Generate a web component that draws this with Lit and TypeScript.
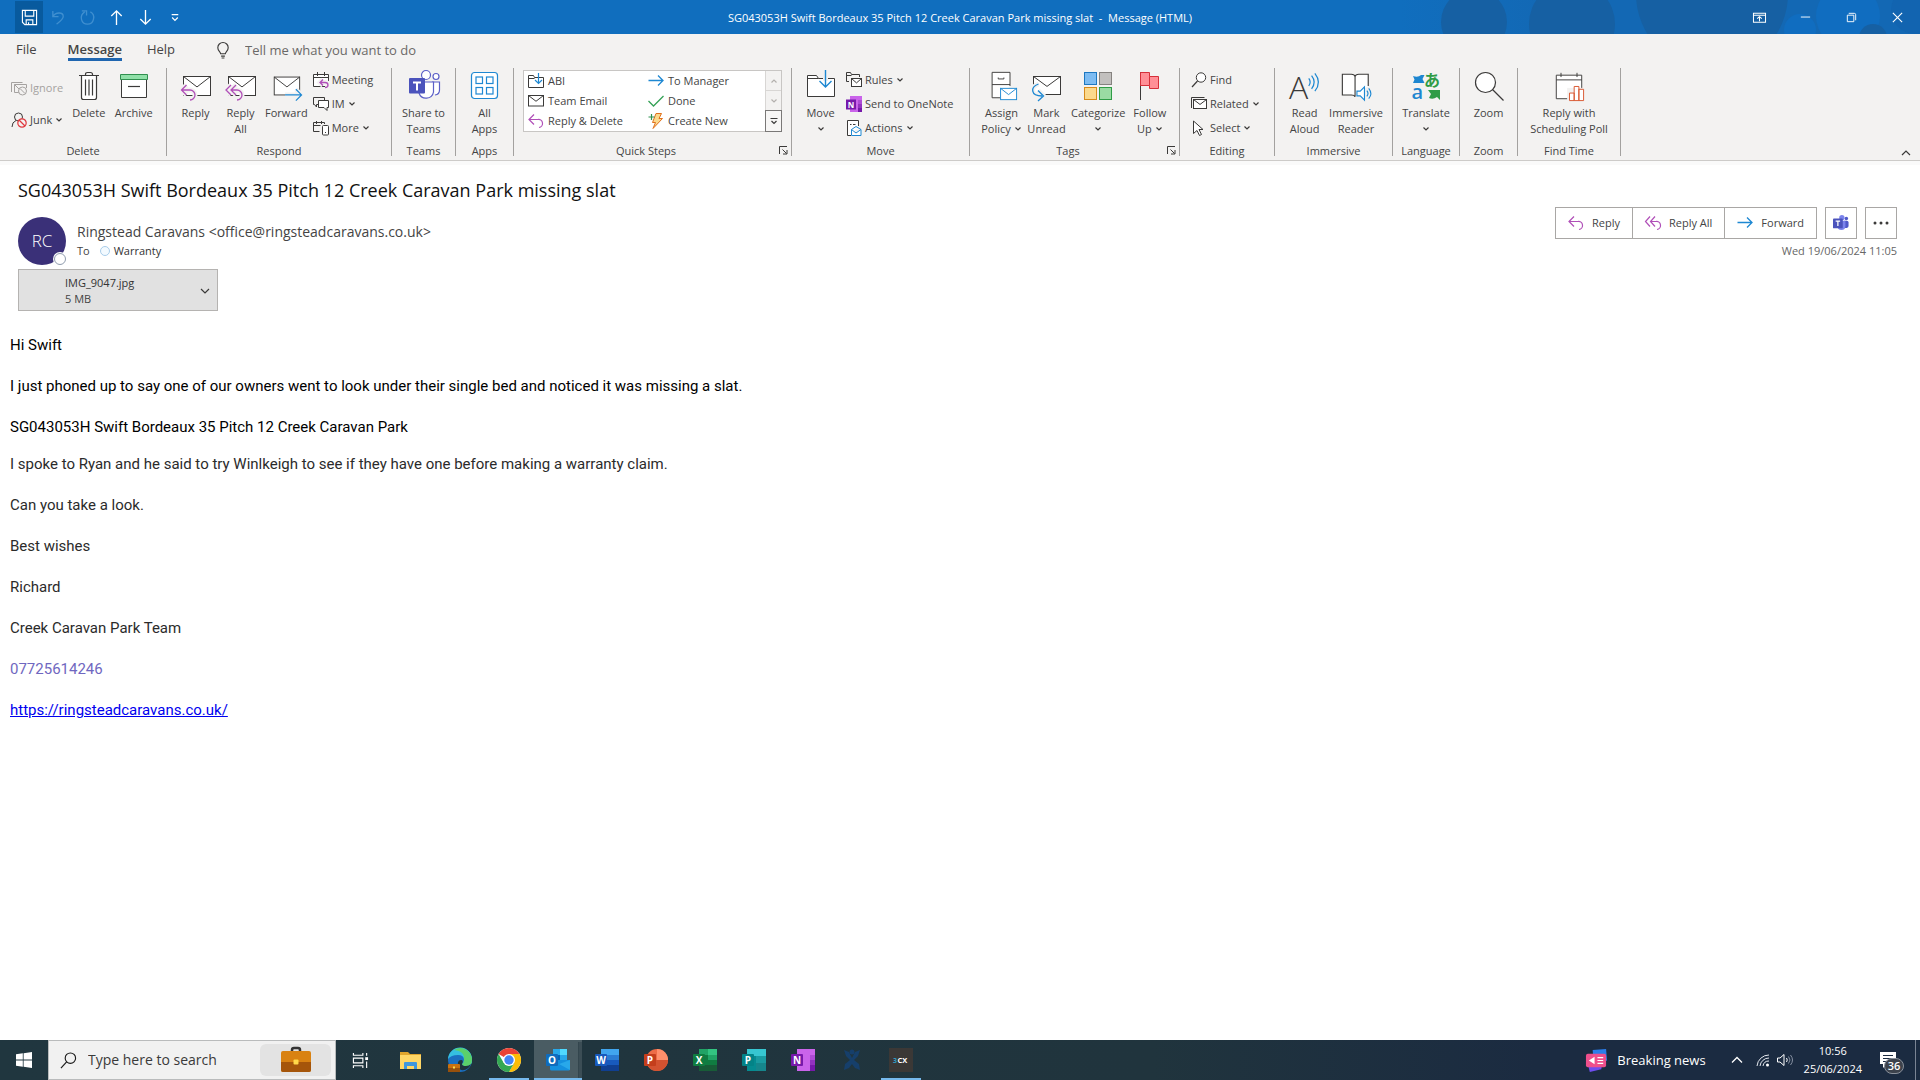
import { LitElement, html, svg, css, nothing, type TemplateResult } from "lit";
import { customElement, property } from "lit/decorators.js";
import { classMap } from "lit/directives/class-map.js";

const INK = "#3b3a39";
const BLUE = "#1e88d2";
const PURPLE = "#b04fb8";
const PAPER = "#f3f2f1";

/* ---------- Icon shapes, keyed by name ---------- */

const envelope = (x: number, y: number, w: number, h: number, color = INK, fill = "#fff") => svg`
  <rect x=${x} y=${y} width=${w} height=${h} fill=${fill} stroke=${color}/>
  <path d="M${x} ${y}L${x + w / 2} ${y + h * 0.55}L${x + w} ${y}" fill="none" stroke=${color}/>`;

const haloed = (d: string, color: string) => svg`
  <path d=${d} fill="none" stroke=${PAPER} stroke-width="5"/>
  <path d=${d} fill="none" stroke=${color} stroke-width="1.3"/>`;

const officeTile = (letter: string, plate: string, bands: TemplateResult) => svg`
  ${bands}
  <rect x="0" y="6" width="12" height="12" rx="1" fill=${plate}/>
  <text x="6" y="15.6" text-anchor="middle" font-size="10" font-weight="700" fill="#fff">${letter}</text>`;

const ICONS: Record<string, [string, TemplateResult]> = {
  save: ["0 0 18 18", svg`<path d="M1.5 1.5h15v15h-12.500l-2.500-2.500z M4.500 1.500v6h9v-6 M5.500 16.500v-5h7v5 M8 14v2.500" fill="none" stroke="#fff" stroke-width="1.200"/>`],
  undo: ["0 0 18 18", svg`<path d="M3 2v6h6 M3 8c3-5 11-5 11 0 0 3-3 5-7 8" fill="none" stroke="#3f8fd0" stroke-width="1.400"/>`],
  redo: ["0 0 18 18", svg`<path d="M3 2h5v5 M12 3c6 3 4 13-3 13-7 0-9-9-3-13" fill="none" stroke="#3f8fd0" stroke-width="1.400"/>`],
  up: ["0 0 18 18", svg`<path d="M9 17V2 M3.500 7.500L9 2l5.500 5.500" fill="none" stroke="#fff" stroke-width="1.400"/>`],
  down: ["0 0 18 18", svg`<path d="M9 1v15 M3.500 10.500L9 16l5.500-5.500" fill="none" stroke="#fff" stroke-width="1.400"/>`],
  customize: ["0 0 18 18", svg`<path d="M6 6h7 M6.500 9l3 3 3-3" fill="none" stroke="#fff" stroke-width="1.300"/>`],
  ribbonOptions: ["0 0 14 14", svg`<path d="M.5 2.500h13v9.500h-13z M.5 4.500h13 M7 11V6 M4.500 8.300L7 6l2.500 2.300" fill="none" stroke="#fff" stroke-width="1.100"/>`],
  minimize: ["0 0 14 14", svg`<path d="M2 6.500h10" stroke="#fff"/>`],
  restore: ["0 0 14 14", svg`<path d="M2.500 4.500h7v7h-7z M4 2.500h6q1.500 0 1.500 1.500v6" fill="none" stroke="#fff"/>`],
  close: ["0 0 14 14", svg`<path d="M2 2l10 10M12 2L2 12" stroke="#fff" stroke-width="1.200"/>`],
  bulb: ["0 0 14 18", svg`<path d="M4.500 12.500c0-2-3-3-3-6.500a5.500 5.500 0 0 1 11 0c0 3.500-3 4.500-3 6.500z M5 15h4 M5.500 17h3" fill="none" stroke=${INK} stroke-width="1.200"/>`],
  chevron: ["0 0 8 6", svg`<path d="M1.500 1.500L4 4l2.500-2.500" fill="none" stroke=${INK} stroke-width="1.200"/>`],
  chevronUp: ["0 0 10 6", svg`<path d="M1 5l4-4 4 4" fill="none" stroke=${INK} stroke-width="1.200"/>`],
  chevronWide: ["0 0 10 6", svg`<path d="M1 1l4 4 4-4" fill="none" stroke=${INK} stroke-width="1.200"/>`],
  scrollUp: ["0 0 8 6", svg`<path d="M1.500 4.500L4 2l2.500 2.500" fill="none" stroke="#b3b0ad" stroke-width="1.200"/>`],
  scrollDown: ["0 0 8 6", svg`<path d="M1.500 1.500L4 4l2.500-2.500" fill="none" stroke="#b3b0ad" stroke-width="1.200"/>`],
  gallery: ["0 0 8 8", svg`<path d="M.5 1.500h7 M1.500 4L4 6.500 6.500 4" fill="none" stroke=${INK} stroke-width="1.200"/>`],
  launcher: ["0 0 9 9", svg`<path d="M.5 8V.5H8 M3.500 3.500l4 4 M8 4v4H4" fill="none" stroke=${INK}/>`],

  trash: ["0 0 32 32", svg`<path d="M8.500 6v21.500q0 2 2 2h11q2 0 2-2V6z" fill="#fff"/><path d="M6 5.500h20 M12.500 5.500v-1q0-2 2-2h3q2 0 2 2v1 M8.500 6v21.500q0 2 2 2h11q2 0 2-2V6 M12.500 9.500v16 M16 9.500v16 M19.500 9.500v16" fill="none" stroke=${INK} stroke-width="1.200"/>`],
  archive: ["0 0 32 32", svg`<path d="M3.500 9.500h25v18h-25z" fill="#fff" stroke=${INK}/><path d="M2.500 4.500h27v5h-27z" fill="#8fe0a8" stroke="#2f8f4e"/><path d="M10 16.500h12" stroke=${INK} stroke-width="1.200"/>`],
  reply: ["0 0 32 32", svg`${envelope(3.5, 6.5, 27, 19)}${haloed("M6.500 15L1.500 20l5 5 M1.500 20H10a5 5 0 0 1 0 10", PURPLE)}`],
  replyAll: ["0 0 32 32", svg`${envelope(3.5, 6.5, 27, 19)}${haloed("M6 15l-5 5 5 5 M11 15l-5 5 5 5 M6 20h6a5 5 0 0 1 0 10", PURPLE)}`],
  forward: ["0 0 34 32", svg`${envelope(4.5, 6.5, 27, 19)}${haloed("M16 25.500h17 M27.500 19.500l6 6-6 6", BLUE)}`],
  teams: ["0 0 32 32", svg`<g fill="#fff" stroke="#5b5fc7" stroke-width="1.200"><circle cx="28" cy="6.500" r="3"/><path d="M24 12h7.500v8q0 4.500-4.500 5"/><circle cx="18" cy="5" r="4.500"/><path d="M11 12h14.500v10a7.500 7.500 0 0 1-14.500 1z"/></g><rect x="1" y="8" width="16" height="15.500" rx="1" fill="#4b53bc"/><path d="M5 12.500h8 M9 12.500v8" stroke="#fff" stroke-width="2"/>`],
  apps: ["0 0 32 32", svg`<g fill="#fff" stroke=${BLUE} stroke-width="1.200"><rect x="2.500" y="2.500" width="26" height="26" rx="3"/><rect x="7" y="7" width="6.500" height="6.500"/><rect x="17.500" y="7" width="6.500" height="6.500"/><rect x="7" y="17.500" width="6.500" height="6.500"/><rect x="17.500" y="17.500" width="6.500" height="6.500"/></g>`],
  move: ["0 0 32 32", svg`<path d="M2.500 26.500v-21h9l2 3h16v18z" fill="#fff" stroke=${INK}/><path d="M2.500 8.500h11" stroke=${INK}/><path d="M20.500 3v8" stroke=${PAPER} stroke-width="5"/><path d="M20.500 0v17 M14.500 11l6 6 6-6" fill="none" stroke=${BLUE} stroke-width="1.400"/>`],
  policy: ["0 0 34 34", svg`<path d="M25.500 17V2.500h-19v27H15 M6.500 15.500h19" fill="#fff" stroke=${INK}/><path d="M13 8v1.500h6V8" fill="none" stroke=${INK}/>${envelope(15.5, 19.5, 17, 12, BLUE)}`],
  unread: ["0 0 32 32", svg`${envelope(2.5, 6.500, 27, 18)}${haloed("M7.500 14C-1 17-.5 26 11 26 M7 20.500l5.500 5.500L7 31", BLUE)}`],
  categorize: ["0 0 32 32", svg`<rect x="2.500" y="2.500" width="12" height="12" fill="#7dbcf2" stroke="#1d78c1"/><rect x="17.500" y="2.500" width="12" height="12" fill="#c2c0be" stroke="#85827f"/><rect x="2.500" y="17.500" width="12" height="12" fill="#fbd98c" stroke="#d68a1b"/><rect x="17.500" y="17.500" width="12" height="12" fill="#9adba3" stroke="#2f9c46"/>`],
  flag: ["0 0 32 32", svg`<path d="M6.500 2v28" stroke=${INK}/><path d="M6.500 2.500h9v4h9v12h-9v-3h-9z" fill="#ff8f96" stroke="#d6303a"/><path d="M15.500 6.500v9" stroke="#d6303a"/>`],
  readAloud: ["0 0 34 32", svg`<text x="0" y="29.500" font-family="Open Sans" font-weight="300" font-size="34" fill=${INK}>A</text><path d="M21 8q3 4 0 8 M24 5q5.500 7 0 14 M27.500 2.500q7.500 9.500 0 19" fill="none" stroke=${BLUE} stroke-width="1.300"/>`],
  reader: ["0 0 34 32", svg`<path d="M30 16V3.500H20q-3.500 0-4 2.500-.500-2.500-4-2.500H2.500v22H12q3.500 0 4 2" fill="#fff" stroke=${INK} stroke-width="1.200"/><path d="M16 6v21" stroke=${INK} stroke-width="1.200"/><path d="M18 21.500h3.500L26 17v14l-4.500-4.500H18z" fill="#fff" stroke=${BLUE} stroke-width="1.200"/><path d="M28.500 21q2.500 3 0 6 M30.500 18.500q4.500 5.500 0 11" fill="none" stroke=${BLUE} stroke-width="1.200"/>`],
  translate: ["0 0 32 32", svg`<path d="M3 6q5 2 8-1l3.500 0-2 4 2 4H3l1.500-3.500z" fill="#1d86d0"/><text x="1.500" y="29" font-family="Open Sans" font-weight="600" font-size="20" fill="#1d86d0">a</text><text x="14" y="15.500" font-family="Noto Sans CJK JP" font-weight="700" font-size="16" fill="#2f9c46">あ</text><path d="M18 20h12v10l-3-3q-4 3-8 1l2-4z" fill="#2f9c46"/>`],
  zoom: ["0 0 32 32", svg`<circle cx="12.500" cy="12.500" r="10" fill="#fff" stroke=${INK} stroke-width="1.200"/><path d="M19.500 19.500L30.500 30.500" stroke=${INK} stroke-width="1.200"/>`],
  poll: ["0 0 34 32", svg`<path d="M3.500 4.500h27v25h-27z" fill="#fff" stroke=${INK}/><path d="M3.500 9.500h27 M8.500 2v4.500 M25.500 2v4.500" stroke=${INK}/><path d="M15 18h18v14H15z" fill=${PAPER}/><path d="M17.500 31.500v-8h5v8z M22.500 31.500v-15h5v15z M27.500 31.500v-12h5v12z" fill="#fff" stroke="#d8532c"/>`],

  ignore: ["0 0 16 16", svg`<path d="M.5 12V2.500h11 M15.500 8V4.500H3.500v8H8 M3.500 4.500L8 9" fill="none" stroke="#a5a2a0"/><circle cx="11.500" cy="11" r="4" fill=${PAPER} stroke="#a5a2a0"/><path d="M9 8.500l5 5" stroke="#a5a2a0"/>`],
  junk: ["0 0 16 16", svg`<circle cx="7.500" cy="5" r="4" fill="none" stroke=${INK}/><path d="M5 8.500Q1 10 1 15" fill="none" stroke=${INK}/><circle cx="11" cy="11" r="4.200" fill=${PAPER} stroke="#e0383e" stroke-width="1.200"/><path d="M8 8l6 6" stroke="#e0383e" stroke-width="1.200"/>`],
  meeting: ["0 0 16 16", svg`<path d="M.5 2.500h15v12H.5z" fill="#fff" stroke=${INK}/><path d="M.5 5.500h15 M4.500 0v4 M11.500 0v4" stroke=${INK}/>${haloed("M10 7.500L7 10.500l3 3 M7 10.500h5q3 0 3 2.500t-3 2.500", PURPLE)}`],
  im: ["0 0 16 16", svg`<path d="M5 8.500H3.500V11L1.500 8.500H.5v-7h11V4" fill="none" stroke=${INK}/><path d="M5.500 4.500h10v7H14v3l-3-3H5.500z" fill="#fff" stroke=${INK}/>`],
  more: ["0 0 16 16", svg`<path d="M6.500 11.500h-6v-9h11V4 M.5 5.500h7 M3.500 1v3 M8.500 1v3" fill="none" stroke=${INK}/><rect x="9.500" y="5.500" width="6" height="9.500" rx="1" fill="#fff" stroke=${INK}/><path d="M12 12.500h1" stroke=${INK}/>`],
  moveSmall: ["0 0 16 16", svg`<path d="M.5 14.500v-12h5l1 2h9v10z M.5 5.500h6" fill="#fff" stroke=${INK}/><path d="M10.500 0v10.500 M7 7l3.500 3.500L14 7" fill="none" stroke=${BLUE} stroke-width="1.200"/>`],
  mail: ["0 0 16 16", envelope(0.5, 2.5, 15, 10.5)],
  replySmall: ["0 0 16 16", svg`<path d="M6 1.500L1 6.500l5 5 M1 6.500h9a4 4 0 0 1 1 8" fill="none" stroke=${PURPLE} stroke-width="1.200"/>`],
  replyAllSmall: ["0 0 16 16", svg`<path d="M5 1.500L.5 6.500l4.500 5 M10 1.500L5.500 6.500l4.500 5 M5.500 6.500H11a4 4 0 0 1 1 8" fill="none" stroke=${PURPLE} stroke-width="1.200"/>`],
  arrowRight: ["0 0 16 16", svg`<path d="M.5 7.500h14.500 M10 2.500l5 5-5 5" fill="none" stroke=${BLUE} stroke-width="1.300"/>`],
  check: ["0 0 16 16", svg`<path d="M.5 8l5 5L15.500 3" fill="none" stroke="#35a156" stroke-width="1.300"/>`],
  bolt: ["0 0 16 16", svg`<path d="M8 .5h5.500L11 5.500h3.500L5 15.500l2.500-6h-3z" fill="#fbd98c" stroke="#e0701c"/><path d="M3.500 1v6 M.5 4h6" stroke="#2f8f4e" stroke-width="1.200"/>`],
  rules: ["0 0 16 16", svg`<path d="M3 9.500H.5v-9h4l1 2h8V5 M.5 3.500h5" fill="none" stroke=${INK}/>${envelope(5.5, 6.5, 10, 8)}`],
  onenoteSmall: ["0 0 16 16", svg`<rect x="4" y="0" width="12" height="16" fill="#ca64ea"/><path d="M12 4h4v4h-4z" fill="#ae4bd5"/><path d="M12 8h4v4h-4z" fill="#9332bf"/><path d="M12 12h4v4h-4z" fill="#7719aa"/><rect x="0" y="3.500" width="10" height="10" fill="#7719aa"/><text x="5" y="11.600" text-anchor="middle" font-size="8" font-weight="700" fill="#fff">N</text>`],
  actions: ["0 0 16 16", svg`<path d="M5 15.500H1.500V.5h11V6" fill="#fff" stroke=${INK}/><path d="M4 4.500h1.500 M7 4.500h2.500" stroke=${INK}/><path d="M5.500 9.500L10 6.500l5 3v6H5.500z M5.500 9.500l4.500 3.500 5-3.500" fill="#fff" stroke=${BLUE}/>`],
  find: ["0 0 16 16", svg`<circle cx="10" cy="5.500" r="4.700" fill="#fff" stroke=${INK}/><path d="M6.500 9L1 15" stroke=${INK} stroke-width="1.200"/>`],
  related: ["0 0 16 16", svg`<path d="M.5 12V1.500h13" fill="none" stroke=${INK}/>${envelope(2.5, 3.5, 13, 9)}`],
  select: ["0 0 16 16", svg`<path d="M2.500 1v12.500l3.500-3 2.500 5 2-1-2.500-5h4z" fill="#fff" stroke=${INK}/>`],
  search: ["0 0 18 18", svg`<circle cx="11" cy="6.500" r="5.500" fill="none" stroke="#1b1b1b" stroke-width="1.200"/><path d="M7 10.500L1 17" stroke="#1b1b1b" stroke-width="1.300"/>`],
  teamsSolid: ["0 0 18 18", svg`<circle cx="15" cy="4" r="2" fill="#5059c9"/><rect x="11" y="6.500" width="6.500" height="8" rx="2" fill="#5059c9"/><circle cx="10" cy="3" r="3" fill="#7b83eb"/><path d="M5 6.500h9v6a4.500 4.500 0 0 1-9 0z" fill="#7b83eb"/><rect x="0" y="4" width="11" height="11" rx="1" fill="#4b53bc"/><path d="M3 7h5 M5.500 7v5.500" stroke="#fff" stroke-width="1.400"/>`],
  dots: ["0 0 16 4", svg`<g fill=${INK}><circle cx="2" cy="2" r="1.500"/><circle cx="8" cy="2" r="1.500"/><circle cx="14" cy="2" r="1.500"/></g>`],

  start: ["0 0 16 16", svg`<path d="M0 2.300L6.800 1.300V7.600H0zM7.600 1.200L16 0V7.600H7.600zM0 8.400H6.800V14.700L0 13.700zM7.600 8.400H16V16L7.600 14.800z" fill="#fff"/>`],
  briefcase: ["0 0 30 26", svg`<path d="M11 5V3q0-2 2-2h4q2 0 2 2v2" fill="none" stroke="#333" stroke-width="2.500"/><rect x="0" y="4" width="30" height="21" rx="2" fill="#d98212"/><path d="M0 15h30v8q0 2-2 2H2q-2 0-2-2z" fill="#a5550b"/><rect x="12.500" y="12.500" width="5" height="5" rx="1" fill="#ffd84a"/>`],
  taskView: ["0 0 18 18", svg`<path d="M1.500 1v2.500h10V1 M1.500 6.500h10v5h-10z M1.500 17v-2.500h10V17" fill="none" stroke="#fff" stroke-width="1.200"/><path d="M15.500 1v3 M15.500 10v7" stroke="#fff" stroke-width="1.200"/><rect x="14" y="5.500" width="3" height="3" fill="#fff"/>`],
  explorer: ["0 0 24 24", svg`<path d="M1 4h8l2 2h11v4H1z" fill="#e0a52c"/><path d="M1 7h21v14H1z" fill="#ffd766"/><path d="M5 21v-6q0-1 1-1h11q1 0 1 1v6h-3v-3H8v3z" fill="#3f97dd"/>`],
  edge: ["0 0 24 24", svg`<circle cx="12" cy="12" r="12" fill="#1b6fc0"/><path d="M0 11A12 12 0 0 1 24 12q0 6-6 6-4 0-4-2 2-1 2-4 0-5-6-5-7 0-10 4z" fill="#35bfe0"/><path d="M12 0a12 12 0 0 1 12 12q0 6-6 6-4 0-4-2 2-1 2-4Q17 3 6 2q3-2 6-2z" fill="#5bd06b"/><path d="M14 16q0 2 4 2 3 0 5-2-3 7-10 6-4-2-3-8 1-2 3-2 3 0 1 4z" fill="#20343d"/><rect x="0" y="16" width="12" height="8" rx="1" fill="#c9710f"/><rect x="0" y="20" width="12" height="4" fill="#97500c"/><rect x="5" y="18.500" width="2" height="2" fill="#ffd84a"/>`],
  chrome: ["0 0 24 24", svg`<circle cx="12" cy="12" r="12" fill="#fff"/><path d="M12 12L1.600 6A12 12 0 0 1 22.400 6z" fill="#ea4335"/><path d="M12 12L22.400 6A12 12 0 0 1 12 24L17.200 15z" fill="#fbbc05"/><path d="M12 12L17.200 15 12 24A12 12 0 0 1 1.600 6L6.800 15z" fill="#34a853"/><path d="M12 6h10.400L17 15z" fill="#fbbc05"/><circle cx="12" cy="12" r="6" fill="#fff"/><circle cx="12" cy="12" r="4.700" fill="#4285f4"/>`],
  outlook: ["0 0 24 24", officeTile("O", "#0f6cbd", svg`<path d="M7 1h14v13H7z" fill="#28a8ea"/><path d="M14 1h7v6h-7z" fill="#50d9ff"/><path d="M7 7h7v6H7z" fill="#0364b8"/><path d="M4 12h20v9q0 1.500-1.500 1.500h-17Q4 22.500 4 21z" fill="#1490df"/><path d="M24 12v10L13 16z" fill="#28a8ea"/>`)],
  word: ["0 0 24 24", officeTile("W", "#185abd", svg`<path d="M6 1h18v6H6z" fill="#41a5ee"/><path d="M6 7h18v5H6z" fill="#2b7cd3"/><path d="M6 12h18v5H6z" fill="#185abd"/><path d="M6 17h18v6H6z" fill="#103f91"/>`)],
  powerpoint: ["0 0 24 24", officeTile("P", "#c43e1c", svg`<circle cx="13" cy="12" r="11" fill="#ed6c47"/><path d="M13 1a11 11 0 0 1 11 11H13z" fill="#ff8f6b"/><path d="M24 12a11 11 0 0 1-22 0z" fill="#d35230"/>`)],
  excel: ["0 0 24 24", officeTile("X", "#107c41", svg`<path d="M6 1h9v6H6z" fill="#21a366"/><path d="M15 1h9v6h-9z" fill="#33c481"/><path d="M6 7h9v10H6z" fill="#107c41"/><path d="M15 7h9v5h-9z" fill="#21a366"/><path d="M15 12h9v5h-9z" fill="#107c41"/><path d="M6 17h18v6H6z" fill="#185c37"/>`)],
  publisher: ["0 0 24 24", officeTile("P", "#038387", svg`<path d="M5 1h19v11H5z" fill="#37c6d0"/><path d="M14 8h10v7H14z" fill="#1a9ba1"/><path d="M5 8h9v15H5z" fill="#058b90"/><path d="M14 15h10v8H14z" fill="#16868c"/>`)],
  onenote: ["0 0 24 24", officeTile("N", "#7719aa", svg`<path d="M6 1h18v22H6z" fill="#ca64ea"/><path d="M19 7h5v5h-5z" fill="#ae4bd5"/><path d="M19 12h5v5h-5z" fill="#9332bf"/><path d="M19 17h5v6h-5z" fill="#7719aa"/>`)],
  xTool: ["0 0 24 24", svg`<path d="M4 2l5 2 3 6 3-6 5-2-2 6-4 4 5 4 1 6-5-2-3-4-3 4-5 2 1-6 5-4-4-4z" fill="#163f6b"/><circle cx="12" cy="4" r="2.500" fill="#163f6b"/>`],
  threeCx: ["0 0 24 24", svg`<rect width="24" height="24" fill="#3b3836"/><text x="4" y="14.500" font-size="7" font-weight="700" fill="#2f9bc4">3</text><text x="8.500" y="14.500" font-size="7.500" font-weight="700" fill="#fff">CX</text>`],
  news: ["0 0 24 24", svg`<path d="M8 1l14-1 1 12-14 4z" fill="#2b7de9"/><path d="M2 12l16 4-1 5-12 3z" fill="#6f4df0"/><rect x="1" y="5" width="21" height="14" rx="2" fill="#ee4f8c"/><path d="M4 12l6-4v8z" fill="#fff"/><path d="M13 9h6 M13 12h6 M13 15h6" stroke="#fff" stroke-width="1.300"/>`],
  trayUp: ["0 0 14 14", svg`<path d="M2 9.500l5-5 5 5" fill="none" stroke="#fff" stroke-width="1.300"/>`],
  wifi: ["0 0 14 14", svg`<path d="M1 13A12 12 0 0 1 13 2 M4 13a9 9 0 0 1 9-8 M7 13a6 6 0 0 1 6-5" fill="none" stroke="#e4e8ee"/><circle cx="11.500" cy="12" r="1.500" fill="#fff"/>`],
  sound: ["0 0 18 14", svg`<path d="M1.500 5v4h2.500l4 3.500V1.500L4 5z" fill="none" stroke="#fff"/><path d="M10.500 5q1.500 2 0 4" fill="none" stroke="#fff"/><path d="M12.500 3.500q3 3.500 0 7 M14.500 2q4 5 0 10" fill="none" stroke="#8892a3"/>`],
  notes: ["0 0 16 16", svg`<path d="M0 0h16v12H7l-4 4v-4H0z" fill="#fff"/><path d="M3 3.500h10 M3 6.500h10 M3 9.500h7" stroke="#1b2b41" stroke-width="1.200"/>`],
};

@customElement("ui-icon")
export class UiIcon extends LitElement {
  @property() name = "";
  static styles = css`
    :host { display: inline-flex; flex: none; }
    svg { display: block; width: 100%; height: 100%; overflow: visible; font-family: "Open Sans", sans-serif; }
  `;
  render() {
    const icon = ICONS[this.name];
    return icon ? html`<svg viewBox=${icon[0]} aria-hidden="true">${icon[1]}</svg>` : nothing;
  }
}

/* ---------- Ribbon data ---------- */

interface Command { icon: string; label: string; second?: string; menu?: boolean; disabled?: boolean; }
interface Group { name: string; pad?: "wide" | "roomy" | "middle"; big?: Command[]; small?: Command[]; smallFirst?: boolean; steps?: Command[]; launcher?: boolean; }

const GROUPS: Group[] = [
  { name: "Delete", pad: "wide", smallFirst: true,
    small: [{ icon: "ignore", label: "Ignore", disabled: true }, { icon: "junk", label: "Junk", menu: true }],
    big: [{ icon: "trash", label: "Delete" }, { icon: "archive", label: "Archive" }] },
  { name: "Respond",
    big: [{ icon: "reply", label: "Reply" }, { icon: "replyAll", label: "Reply", second: "All" }, { icon: "forward", label: "Forward" }],
    small: [{ icon: "meeting", label: "Meeting" }, { icon: "im", label: "IM", menu: true }, { icon: "more", label: "More", menu: true }] },
  { name: "Teams", pad: "middle", big: [{ icon: "teams", label: "Share to", second: "Teams" }] },
  { name: "Apps", pad: "middle", big: [{ icon: "apps", label: "All", second: "Apps" }] },
  { name: "Quick Steps", pad: "roomy", launcher: true,
    steps: [{ icon: "moveSmall", label: "ABI" }, { icon: "arrowRight", label: "To Manager" }, { icon: "mail", label: "Team Email" },
      { icon: "check", label: "Done" }, { icon: "replySmall", label: "Reply & Delete" }, { icon: "bolt", label: "Create New" }] },
  { name: "Move",
    big: [{ icon: "move", label: "Move", menu: true }],
    small: [{ icon: "rules", label: "Rules", menu: true }, { icon: "onenoteSmall", label: "Send to OneNote" }, { icon: "actions", label: "Actions", menu: true }] },
  { name: "Tags", pad: "roomy", launcher: true,
    big: [{ icon: "policy", label: "Assign", second: "Policy", menu: true }, { icon: "unread", label: "Mark", second: "Unread" },
      { icon: "categorize", label: "Categorize", menu: true }, { icon: "flag", label: "Follow", second: "Up", menu: true }] },
  { name: "Editing", pad: "wide",
    small: [{ icon: "find", label: "Find" }, { icon: "related", label: "Related", menu: true }, { icon: "select", label: "Select", menu: true }] },
  { name: "Immersive", pad: "middle", big: [{ icon: "readAloud", label: "Read", second: "Aloud" }, { icon: "reader", label: "Immersive", second: "Reader" }] },
  { name: "Language", pad: "middle", big: [{ icon: "translate", label: "Translate", menu: true }] },
  { name: "Zoom", pad: "middle", big: [{ icon: "zoom", label: "Zoom" }] },
  { name: "Find Time", pad: "middle", big: [{ icon: "poll", label: "Reply with", second: "Scheduling Poll" }] },
];

@customElement("mail-ribbon")
export class MailRibbon extends LitElement {
  static styles = css`
    :host { display: block; background: #f3f2f1; color: #444; font: 11px/16px "Open Sans", "Noto Sans", sans-serif; }
    button { font: inherit; color: inherit; background: none; border: 0; padding: 0; margin: 0; }
    .tabs { display: flex; align-items: flex-start; height: 34px; font-size: 13px; padding-left: 16px; }
    .tab { line-height: 18px; padding-top: 6px; }
    .file { margin-right: 31px; }
    .message { font-weight: 600; margin-right: 25px; border-bottom: 3px solid #1f66b0; }
    .help { margin-right: 41px; }
    .tell { display: flex; align-items: center; gap: 15px; height: 32px; }
    .tell ui-icon { width: 14px; height: 17px; }
    .tell input { font: inherit; color: #605e5c; background: none; border: 0; padding: 0; width: 220px; outline: none; }
    .tell input::placeholder { color: #6b6967; opacity: 1; }
    .groups { display: grid; grid-template-columns: 167px 225px 64px 58px 278px 178px 210px 95px 118px 67px 58px 103px 1fr; border-bottom: 1px solid #cdcbc9; padding-bottom: 4px; }
    .group { display: flex; flex-direction: column; height: 88px; border-right: 1px solid #a3a19f; }
    .body { display: flex; flex: 1; padding: 0 6px; gap: 3px; }
    .wide .body { padding: 0 11px; }
    .roomy .body { padding: 0 9px; }
    .middle .body { justify-content: center; padding: 0; }
    .footer { display: flex; align-items: center; height: 10px; line-height: 10px; }
    .name { flex: 1; text-align: center; }
    .launcher { width: 10px; height: 10px; margin-right: 3px; }
    .launcher ui-icon { width: 9px; height: 9px; }
    .bigs { display: flex; align-items: flex-start; }
    .big { display: flex; flex-direction: column; align-items: center; min-width: 45px; padding: 2px 2px 0; }
    .big > ui-icon { width: 32px; height: 32px; margin-bottom: 3px; }
    .line { display: flex; align-items: center; justify-content: center; gap: 3px; white-space: nowrap; height: 16px; }
    .line ui-icon, .small .arrow { width: 8px; height: 6px; }
    .smalls { display: flex; flex-direction: column; }
    .small { display: flex; align-items: center; gap: 3px; height: 24px; white-space: nowrap; }
    .small > .glyph { width: 16px; height: 16px; }
    .smallFirst .smalls { padding-top: 4px; width: 56px; }
    .smallFirst .small { height: 32px; }
    .disabled { color: #a5a2a0; }
    .steps { display: grid; grid-template-columns: 1fr 16px; flex: 1; height: 62px; margin-top: 2px; border: 1px solid #c8c6c4; background: #fff; box-sizing: border-box; }
    .list { display: grid; grid-template-columns: 120px 1fr; grid-auto-rows: 20px; padding-left: 4px; }
    .step { display: flex; align-items: center; gap: 4px; white-space: nowrap; }
    .step ui-icon { width: 16px; height: 16px; }
    .scroll { display: grid; grid-template-rows: 20px 20px 1fr; border-left: 1px solid #d8d6d4; }
    .scroll button { display: flex; align-items: center; justify-content: center; background: #f3f2f1; border-bottom: 1px solid #d8d6d4; }
    .scroll ui-icon { width: 8px; height: 8px; }
    .scroll .open { border: 1px solid #7a7877; margin: -1px; background: #f7f6f5; }
    .tail { display: flex; justify-content: flex-end; align-items: flex-end; padding: 0 9px 0 0; }
    .tail ui-icon { width: 10px; height: 6px; }
    .tail button { display: flex; }
  `;

  private big(c: Command) {
    const arrow = c.menu ? html`<ui-icon name="chevron"></ui-icon>` : nothing;
    return html`<button class="big"><ui-icon name=${c.icon}></ui-icon>
      <span class="line">${c.label}</span>
      <span class="line">${c.second ?? nothing}${arrow}</span></button>`;
  }

  private small(c: Command) {
    return html`<button class=${classMap({ small: true, disabled: !!c.disabled })} ?disabled=${!!c.disabled}>
      <ui-icon class="glyph" name=${c.icon}></ui-icon>${c.label}${c.menu ? html`<ui-icon class="arrow" name="chevron"></ui-icon>` : nothing}</button>`;
  }

  private group(g: Group) {
    const bigs = g.big ? html`<div class="bigs">${g.big.map((c) => this.big(c))}</div>` : nothing;
    const smalls = g.small ? html`<div class="smalls">${g.small.map((c) => this.small(c))}</div>` : nothing;
    return html`<section class=${classMap({ group: true, wide: g.pad === "wide", roomy: g.pad === "roomy", middle: g.pad === "middle", smallFirst: !!g.smallFirst })}>
      <div class="body">
        ${g.smallFirst ? [smalls, bigs] : [bigs, smalls]}
        ${g.steps ? html`<div class="steps">
          <div class="list">${g.steps.map((s) => html`<button class="step"><ui-icon name=${s.icon}></ui-icon>${s.label}</button>`)}</div>
          <div class="scroll">
            <button aria-label="Previous row"><ui-icon name="scrollUp"></ui-icon></button>
            <button aria-label="Next row"><ui-icon name="scrollDown"></ui-icon></button>
            <button class="open" aria-label="More quick steps"><ui-icon name="gallery"></ui-icon></button>
          </div></div>` : nothing}
      </div>
      <div class="footer"><span class="name">${g.name}</span>
        ${g.launcher ? html`<button class="launcher" aria-label="${g.name} options"><ui-icon name="launcher"></ui-icon></button>` : nothing}</div>
    </section>`;
  }

  render() {
    return html`
      <nav class="tabs">
        <button class="tab file">File</button>
        <button class="tab message">Message</button>
        <button class="tab help">Help</button>
        <label class="tell"><ui-icon name="bulb"></ui-icon><input type="text" placeholder="Tell me what you want to do" aria-label="Tell me what you want to do"></label>
      </nav>
      <div class="groups">${GROUPS.map((g) => this.group(g))}
        <div class="tail"><button aria-label="Collapse the ribbon"><ui-icon name="chevronUp"></ui-icon></button></div>
      </div>`;
  }
}

@customElement("title-bar")
export class TitleBar extends LitElement {
  static styles = css`
    :host { display: grid; grid-template-columns: 1fr auto 1fr; align-items: center; height: 34px; position: relative; overflow: hidden; background: #106ebe; color: #fff; font: 11px/16px "Open Sans", "Noto Sans", sans-serif; }
    button { display: flex; align-items: center; justify-content: center; background: none; border: 0; padding: 0; }
    .backdrop { position: absolute; top: 0; right: 0; width: 520px; height: 34px; }
    .quick { display: flex; padding-left: 15px; gap: 1px; }
    .quick button { width: 28px; height: 32px; }
    .quick .save { background: #085a9e; }
    .quick ui-icon { width: 17px; height: 17px; }
    .title { position: relative; white-space: pre; padding-top: 2px; }
    .controls { position: relative; display: flex; justify-content: flex-end; }
    .controls button { width: 46px; height: 32px; }
    .controls ui-icon { width: 13px; height: 13px; }
  `;
  render() {
    return html`
      <svg class="backdrop" viewBox="0 0 520 34" aria-hidden="true">
        <defs><linearGradient id="fade"><stop offset="0" stop-color="#106ebe"/><stop offset="0.3" stop-color="#1368b4"/><stop offset="1" stop-color="#1368b4"/></linearGradient></defs>
        <rect width="520" height="34" fill="url(#fade)"/>
        <g fill="#1660a3"><circle cx="74" cy="22" r="33"/><circle cx="172" cy="24" r="43"/><circle cx="312" cy="-6" r="76"/></g>
        <circle cx="448" cy="16" r="32" fill="#106dc0"/><circle cx="400" cy="30" r="16" fill="#106dc0"/>
        <circle cx="473" cy="38" r="14" fill="#1660a3"/><circle cx="515" cy="10" r="24" fill="#1264b0"/>
      </svg>
      <div class="quick">
        <button class="save" aria-label="Save"><ui-icon name="save"></ui-icon></button>
        <button aria-label="Undo"><ui-icon name="undo"></ui-icon></button>
        <button aria-label="Redo"><ui-icon name="redo"></ui-icon></button>
        <button aria-label="Previous item"><ui-icon name="up"></ui-icon></button>
        <button aria-label="Next item"><ui-icon name="down"></ui-icon></button>
        <button aria-label="Customize toolbar"><ui-icon name="customize"></ui-icon></button>
      </div>
      <div class="title">SG043053H Swift Bordeaux 35 Pitch 12 Creek Caravan Park missing slat  -  Message (HTML)</div>
      <div class="controls">
        <button aria-label="Ribbon display options"><ui-icon name="ribbonOptions"></ui-icon></button>
        <button aria-label="Minimize"><ui-icon name="minimize"></ui-icon></button>
        <button aria-label="Restore"><ui-icon name="restore"></ui-icon></button>
        <button aria-label="Close"><ui-icon name="close"></ui-icon></button>
      </div>`;
  }
}

@customElement("mail-message")
export class MailMessage extends LitElement {
  static styles = css`
    :host { display: block; font: 11px/16px "Open Sans", "Noto Sans", sans-serif; color: #444; }
    button { font: inherit; color: inherit; background: none; border: 0; padding: 0; }
    header { display: flex; justify-content: space-between; padding: 0 23px 0 18px; border-top: 4px solid #fafafa; }
    h1 { margin: 12px 0 14px; font-size: 18px; line-height: 26px; font-weight: 400; color: #111; }
    .sender { display: flex; gap: 11px; margin-bottom: 4px; }
    .avatar { position: relative; display: flex; align-items: center; justify-content: center; width: 48px; height: 48px; border-radius: 50%; background: #3a3078; color: #fff; font-size: 17px; font-weight: 300; }
    .presence { position: absolute; right: 0; bottom: 0; width: 10px; height: 10px; border: 1px solid #8f9bad; border-radius: 50%; background: #fff; box-shadow: 0 0 0 1px #fff; }
    .from { font-size: 14px; line-height: 20px; padding-top: 5px; margin-bottom: 1px; }
    .to { display: flex; align-items: center; }
    .to .dot { width: 8px; height: 8px; border: 1px solid #a9cdea; border-radius: 50%; background: #f3faff; margin: 0 4px 0 10px; }
    .to .name { color: #333; }
    .file { display: flex; align-items: center; justify-content: space-between; width: 200px; height: 42px; padding: 1px 7px 0 46px; border: 1px solid #b5b3b1; background: #e1e1e1; text-align: left; }
    .file ui-icon { width: 10px; height: 6px; }
    .file .info { display: grid; }
    .file .title { color: #333; }
    .actions { display: flex; gap: 8px; margin: 42px 0 4px; }
    .reply { display: flex; }
    .reply button + button { margin-left: -1px; }
    .actions button { display: flex; align-items: center; justify-content: center; gap: 8px; height: 32px; min-width: 32px; border: 1px solid #a9a7a5; background: #fff; }
    .reply button { padding: 0 12px; }
    .reply ui-icon { width: 16px; height: 16px; }
    .square ui-icon { width: 16px; height: 16px; }
    .dots ui-icon { width: 16px; height: 4px; }
    .date { text-align: right; color: #666; }
    article { padding: 24px 10px; font: 15px/20px Roboto, "Open Sans", sans-serif; color: #2b2b2b; }
    p { margin: 0 0 21px; }
    .strong { color: #000; }
    .tight { margin-bottom: 17px; }
    .phone { color: #6f67c0; }
    a { color: #0000ee; }
  `;
  render() {
    return html`
      <header>
        <div>
          <h1>SG043053H Swift Bordeaux 35 Pitch 12 Creek Caravan Park missing slat</h1>
          <div class="sender">
            <div class="avatar">RC<span class="presence"></span></div>
            <div>
              <div class="from">Ringstead Caravans &lt;office@ringsteadcaravans.co.uk&gt;</div>
              <div class="to">To<span class="dot"></span><span class="name">Warranty</span></div>
            </div>
          </div>
          <button class="file"><span class="info"><span class="title">IMG_9047.jpg</span><span>5 MB</span></span><ui-icon name="chevronWide"></ui-icon></button>
        </div>
        <div>
          <div class="actions">
            <div class="reply">
              <button><ui-icon name="replySmall"></ui-icon>Reply</button>
              <button><ui-icon name="replyAllSmall"></ui-icon>Reply All</button>
              <button><ui-icon name="arrowRight"></ui-icon>Forward</button>
            </div>
            <button class="square" aria-label="Share to Teams"><ui-icon name="teamsSolid"></ui-icon></button>
            <button class="dots" aria-label="More actions"><ui-icon name="dots"></ui-icon></button>
          </div>
          <div class="date">Wed 19/06/2024 11:05</div>
        </div>
      </header>
      <article>
        <p class="strong">Hi Swift</p>
        <p class="strong">I just phoned up to say one of our owners went to look under their single bed and noticed it was missing a slat.</p>
        <p class="strong tight">SG043053H Swift Bordeaux 35 Pitch 12 Creek Caravan Park</p>
        <p>I spoke to Ryan and he said to try Winlkeigh to see if they have one before making a warranty claim.</p>
        <p>Can you take a look.</p>
        <p>Best wishes</p>
        <p>Richard</p>
        <p>Creek Caravan Park Team</p>
        <p class="phone">07725614246</p>
        <p><a href="https://ringsteadcaravans.co.uk/">https://ringsteadcaravans.co.uk/</a></p>
      </article>`;
  }
}

const APPS: [string, string, string][] = [
  ["explorer", "File Explorer", ""], ["edge", "Edge", ""], ["chrome", "Chrome", "running"], ["outlook", "Outlook", "active"],
  ["word", "Word", ""], ["powerpoint", "PowerPoint", ""], ["excel", "Excel", ""], ["publisher", "Publisher", ""],
  ["onenote", "OneNote", ""], ["xTool", "Remote tool", ""], ["threeCx", "3CX", "running"],
];

@customElement("task-bar")
export class TaskBar extends LitElement {
  static styles = css`
    :host { display: flex; height: 40px; background: linear-gradient(90deg, #20363f, #20343d 60%, #1b2b41 80%); color: #fff; font: 11px/18px "Open Sans", "Noto Sans", sans-serif; }
    button { font: inherit; color: inherit; background: none; border: 0; padding: 0; display: flex; align-items: center; justify-content: center; }
    .start { width: 48px; }
    .start ui-icon { width: 16px; height: 16px; }
    .search { display: flex; align-items: center; width: 288px; box-sizing: border-box; border: 1px solid #b9bbbc; background: #f1f1f1; padding: 0 4px 0 11px; }
    .search > ui-icon { width: 17px; height: 17px; margin-right: 11px; }
    .search input { flex: 1; min-width: 0; font: 14px/20px "Open Sans", "Noto Sans", sans-serif; color: #333; background: none; border: 0; padding: 0; outline: none; }
    .search input::placeholder { color: #3a3a3a; opacity: 1; }
    .highlight { display: flex; align-items: center; justify-content: center; width: 71px; height: 32px; border-radius: 6px; background: #e3e3e3; }
    .highlight ui-icon { width: 30px; height: 26px; }
    .view { width: 48px; margin-right: 3px; }
    .view ui-icon { width: 17px; height: 17px; }
    .apps { display: flex; gap: 1px; flex: 1; }
    .app { width: 48px; height: 40px; box-sizing: border-box; border-top: 2px solid transparent; border-bottom: 2px solid transparent; }
    .app ui-icon { width: 24px; height: 24px; }
    .running { width: 40px; margin: 0 4px; border-bottom-color: #76b9ed; }
    .active { border-top-color: #4a5c63; border-bottom-color: #76b9ed; background: linear-gradient(90deg, #4a5c63 44px, #2b3e46 44px, #3b4d55 45px); }
    .tray { display: flex; align-items: center; }
    .news { gap: 9px; font-size: 13px; margin-right: 24px; }
    .news ui-icon { width: 23px; height: 23px; }
    .up, .wifi { width: 14px; height: 14px; }
    .wifi { margin-left: 12px; }
    .sound { width: 18px; height: 14px; margin: 0 10px 0 6px; }
    .up ui-icon, .wifi ui-icon, .sound ui-icon { width: 100%; height: 100%; }
    .clock { text-align: center; line-height: 18px; }
    .center { position: relative; width: 30px; height: 40px; margin-left: 11px; }
    .center ui-icon { width: 16px; height: 16px; }
    .count { position: absolute; left: 11px; top: 18px; min-width: 18px; height: 14px; line-height: 14px; border-radius: 8px; border: 1px solid #8a919c; background: #3c424c; font-weight: 600; }
    .desktop { width: 5px; height: 40px; margin-left: 12px; border-left: 1px solid #7a8494; }
  `;
  render() {
    return html`
      <button class="start" aria-label="Start"><ui-icon name="start"></ui-icon></button>
      <label class="search"><ui-icon name="search"></ui-icon>
        <input type="text" placeholder="Type here to search" aria-label="Type here to search">
        <span class="highlight"><ui-icon name="briefcase"></ui-icon></span></label>
      <button class="view" aria-label="Task view"><ui-icon name="taskView"></ui-icon></button>
      <div class="apps">${APPS.map(([icon, label, state]) => html`
        <button class=${classMap({ app: true, running: state === "running", active: state === "active" })} aria-label=${label}><ui-icon name=${icon}></ui-icon></button>`)}</div>
      <div class="tray">
        <button class="news"><ui-icon name="news"></ui-icon>Breaking news</button>
        <button class="up" aria-label="Show hidden icons"><ui-icon name="trayUp"></ui-icon></button>
        <button class="wifi" aria-label="Network"><ui-icon name="wifi"></ui-icon></button>
        <button class="sound" aria-label="Volume"><ui-icon name="sound"></ui-icon></button>
        <div class="clock"><div>10:56</div><div>25/06/2024</div></div>
        <button class="center" aria-label="Notifications"><ui-icon name="notes"></ui-icon><span class="count">36</span></button>
        <button class="desktop" aria-label="Show desktop"></button>
      </div>`;
  }
}

@customElement("app-root")
export class AppRoot extends LitElement {
  static styles = css`
    :host { display: flex; flex-direction: column; min-height: 100vh; background: #fff; }
    mail-message { flex: 1; }
  `;
  render() {
    return html`<title-bar></title-bar><mail-ribbon></mail-ribbon><mail-message></mail-message><task-bar></task-bar>`;
  }
}
